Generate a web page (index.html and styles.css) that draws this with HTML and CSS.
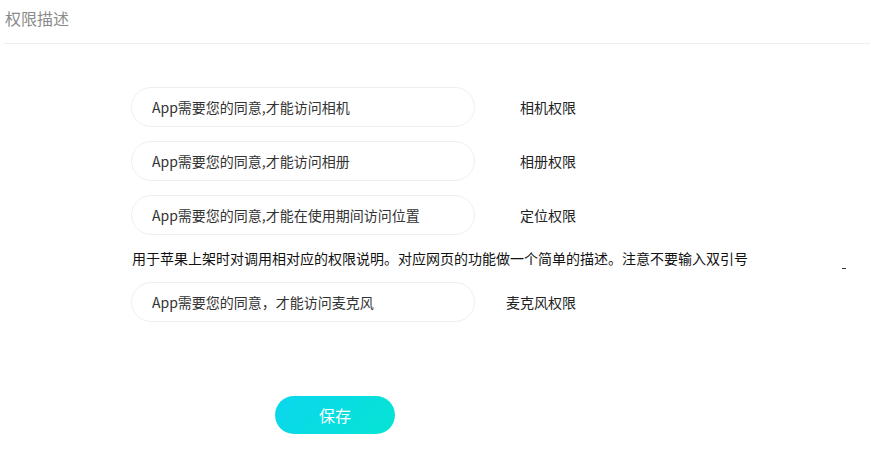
FILE: index.html
```html
<!DOCTYPE html>
<html lang="zh-CN">
<head>
<meta charset="utf-8">
<title>权限描述</title>
<link rel="stylesheet" href="styles.css">
</head>
<body>
<div class="header"><span class="title">权限描述</span></div>
<div class="form">
  <div class="row">
    <input class="field" type="text" value="App需要您的同意,才能访问相机">
    <span class="label">相机权限</span>
  </div>
  <div class="row">
    <input class="field" type="text" value="App需要您的同意,才能访问相册">
    <span class="label">相册权限</span>
  </div>
  <div class="row">
    <input class="field" type="text" value="App需要您的同意,才能在使用期间访问位置">
    <span class="label">定位权限</span>
  </div>
  <div class="desc">
    <span class="desc-text">用于苹果上架时对调用相对应的权限说明。对应网页的功能做一个简单的描述。注意不要输入双引号</span>
    <span class="dash"></span>
  </div>
  <div class="row">
    <input class="field" type="text" value="App需要您的同意，才能访问麦克风">
    <span class="label">麦克风权限</span>
  </div>
  <div class="actions">
    <button class="save" type="button">保存</button>
  </div>
</div>
</body>
</html>
```

FILE: styles.css
```css
html, body {
  margin: 0;
  padding: 0;
  background: #ffffff;
  font-family: "Noto Sans CJK SC", "Microsoft YaHei", sans-serif;
}

.header {
  margin: 0 1px 0 4px;
  padding: 6px 0 13px 1px;
  border-bottom: 1px solid #eeeeee;
}

.title {
  display: block;
  font-size: 16px;
  line-height: 24px;
  color: #8a8a8a;
}

.form {
  margin: 43px 0 0 131px;
  width: 716px;
  display: flex;
  flex-direction: column;
}

.row {
  display: flex;
  align-items: center;
  margin-bottom: 14px;
}

.field {
  box-sizing: border-box;
  width: 344px;
  height: 40px;
  border: 1px solid #efefef;
  border-radius: 20px;
  padding: 0 0 0 20px;
  margin: 0;
  outline: none;
  background: #ffffff;
  font-family: "Noto Sans CJK SC", "Microsoft YaHei", sans-serif;
  font-size: 14px;
  color: #333333;
}

.label {
  width: 101px;
  text-align: right;
  font-size: 14px;
  line-height: 20px;
  color: #222222;
}

.desc {
  display: flex;
  justify-content: space-between;
  align-items: flex-end;
  margin: -1px 0 14px 1px;
}

.desc-text {
  font-size: 14px;
  line-height: 20px;
  color: #111111;
}

.dash {
  width: 4px;
  height: 1px;
  background: #333333;
  margin: 0 1px -1px 0;
}

.actions {
  margin-top: 60px;
  padding-left: 144px;
}

.save {
  width: 120px;
  height: 38px;
  border: none;
  border-radius: 19px;
  background: linear-gradient(135deg, #0cd6ee 0%, #05e4d3 100%);
  color: #ffffff;
  font-family: "Noto Sans CJK SC", "Microsoft YaHei", sans-serif;
  font-size: 16px;
  padding: 0;
  cursor: pointer;
}
```
